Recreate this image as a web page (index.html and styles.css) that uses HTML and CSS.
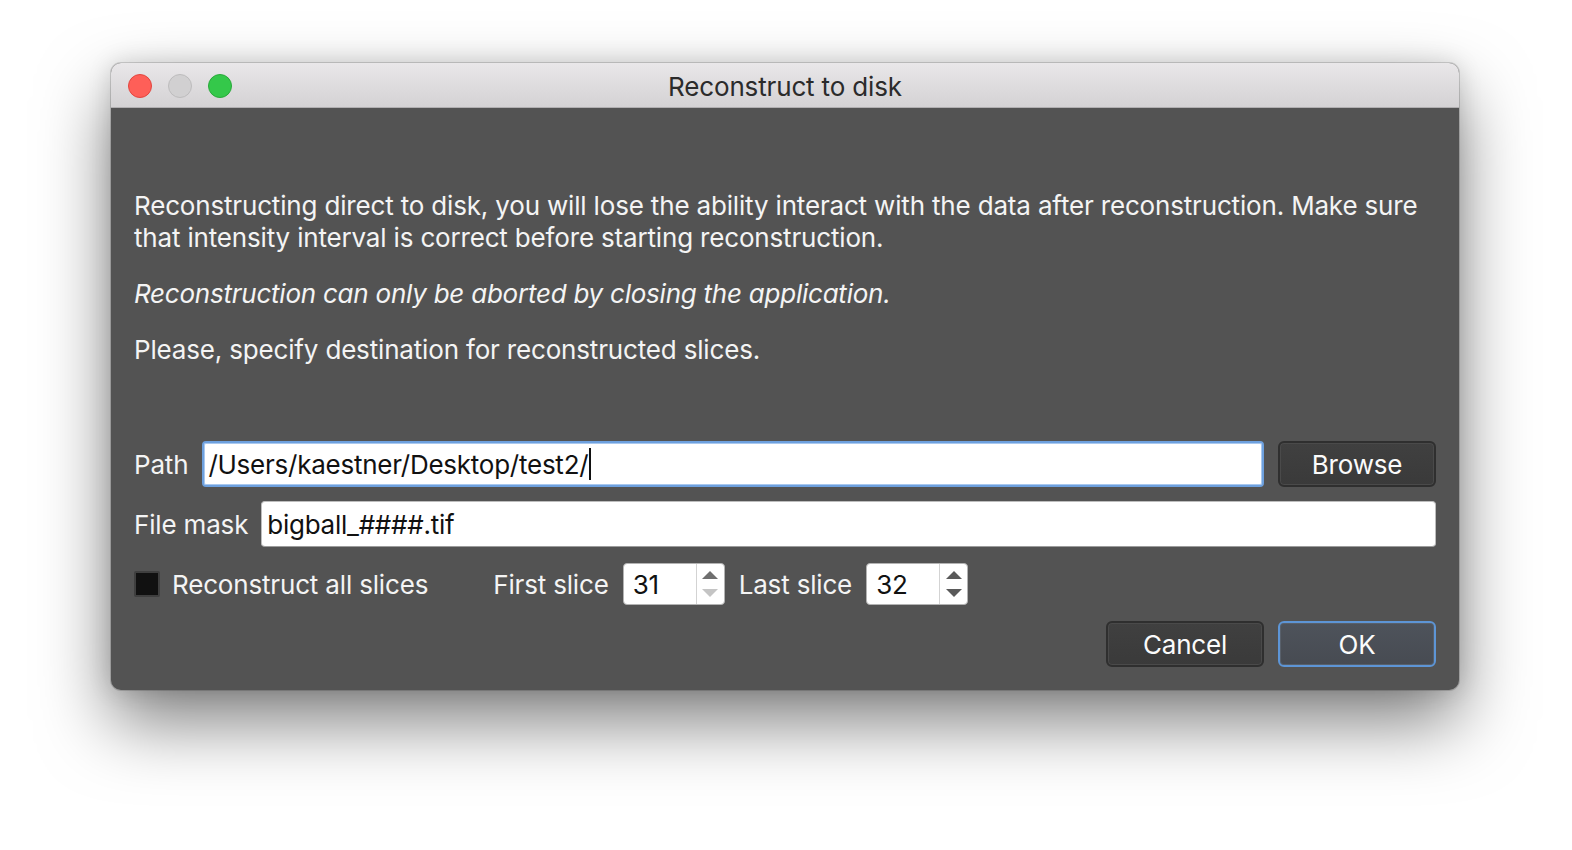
FILE: index.html
```html
<!DOCTYPE html>
<html>
<head>
<meta charset="utf-8">
<link rel="stylesheet" href="styles.css">
</head>
<body>
<div class="desk">
  <div class="window">
    <div class="titlebar">
      <div class="lights">
        <span class="light red"></span>
        <span class="light gray"></span>
        <span class="light green"></span>
      </div>
      <div class="title">Reconstruct to disk</div>
    </div>
    <div class="content">
      <p class="para">Reconstructing direct to disk, you will lose the ability interact with the data after reconstruction. Make sure that intensity interval is correct before starting reconstruction.</p>
      <p class="para italic">Reconstruction can only be aborted by closing the application.</p>
      <p class="para">Please, specify destination for reconstructed slices.</p>

      <div class="form">
        <div class="row">
          <span class="label">Path</span>
          <div class="input focus"><span>/Users/kaestner/Desktop/test2/</span><span class="caret"></span></div>
          <div class="btn">Browse</div>
        </div>
        <div class="row">
          <span class="label">File mask</span>
          <div class="input plain"><span>bigball_####.tif</span></div>
        </div>
        <div class="row slices">
          <span class="check"></span>
          <span class="label checklabel">Reconstruct all slices</span>
          <span class="label first">First slice</span>
          <div class="spin">
            <span class="num">31</span>
            <div class="arrows">
              <svg width="20" height="34" viewBox="0 0 20 34"><path d="M2 12 L10 4 L18 12 Z" fill="#6f6f6f"/><path d="M2 22 L10 30 L18 22 Z" fill="#c4c4c4"/></svg>
            </div>
          </div>
          <span class="label last">Last slice</span>
          <div class="spin">
            <span class="num">32</span>
            <div class="arrows">
              <svg width="20" height="34" viewBox="0 0 20 34"><path d="M2 12 L10 4 L18 12 Z" fill="#5a5a5a"/><path d="M2 22 L10 30 L18 22 Z" fill="#5a5a5a"/></svg>
            </div>
          </div>
        </div>
        <div class="row buttons">
          <div class="btn">Cancel</div>
          <div class="btn ok">OK</div>
        </div>
      </div>
    </div>
  </div>
</div>
</body>
</html>
```

FILE: styles.css
```css
html, body {
  margin: 0;
  padding: 0;
  background: #ffffff;
}
body {
  width: 1572px;
  height: 850px;
  overflow: hidden;
  font-family: Inter, "Noto Sans", sans-serif;
}
.desk {
  padding: 63px 0 0 111px;
}
.window {
  width: 1348px;
  height: 627px;
  border-radius: 10px;
  background: #535353;
  box-shadow: 0 32px 70px rgba(0,0,0,0.5), 0 0 24px rgba(0,0,0,0.14), 0 0 0 1px rgba(0,0,0,0.15);
  overflow: hidden;
  display: flex;
  flex-direction: column;
}
.titlebar {
  height: 44px;
  flex: none;
  background: linear-gradient(#e9e7e9, #d4d2d4);
  border-bottom: 1px solid #b1afb1;
  position: relative;
  display: flex;
  align-items: center;
  justify-content: center;
}
.lights {
  position: absolute;
  left: 17px;
  top: 11px;
  display: flex;
  gap: 16px;
}
.light {
  width: 24px;
  height: 24px;
  border-radius: 50%;
  box-sizing: border-box;
}
.red { background: #fe5f58; border: 1px solid #e2463f; }
.gray { background: #d1d0d1; border: 1px solid #bdbcbd; }
.green { background: #34c84a; border: 1px solid #29a93a; }
.title {
  font-size: 26px;
  color: #2b2b2b;
  letter-spacing: -0.15px;
  margin-top: 3px;
}
.content {
  padding: 82px 23px 23px 23px;
  color: #f4f4f4;
  font-size: 26px;
  letter-spacing: -0.17px;
  flex: 1;
  display: flex;
  flex-direction: column;
}
.para {
  margin: 0 0 24px 0;
  line-height: 32px;
}
.italic { font-style: italic; letter-spacing: -0.24px; }
.form {
  margin-top: 51px;
  display: flex;
  flex-direction: column;
}
.row {
  display: flex;
  align-items: center;
}
.label {
  white-space: nowrap;
}
.row + .row { margin-top: 14px; }
.input {
  flex: 1;
  height: 46px;
  box-sizing: border-box;
  background: #fff;
  color: #111;
  display: flex;
  align-items: center;
  padding-left: 4px;
  border-radius: 4px;
  margin-left: 14px;
  letter-spacing: -0.25px;
}
.input.focus {
  border: 2px solid #6da0de;
  box-shadow: inset 0 0 0 1px #a9c8ee;
}
.input.plain {
  border: 1px solid #bdbdbd;
  border-bottom-color: #9c9c9c;
  margin-left: 13px;
  padding-left: 5px;
}
.caret {
  width: 2px;
  height: 32px;
  background: #111;
  margin-left: 1px;
}
.btn {
  width: 158px;
  height: 46px;
  box-sizing: border-box;
  border: 2px solid #2f2f2f;
  border-radius: 6px;
  background: linear-gradient(#404040, #3a3a3a);
  box-shadow: inset 0 0 0 1px #4a4a4a;
  color: #fbfbfb;
  display: flex;
  align-items: center;
  justify-content: center;
  margin-left: 14px;
}
.slices {
  height: 42px;
  margin-top: 16px !important;
}
.check {
  width: 26px;
  height: 26px;
  box-sizing: border-box;
  background: #111111;
  border: 2px solid #3f3f3f;
  border-radius: 2px;
}
.checklabel { margin-left: 12px; }
.first { margin-left: 65px; }
.last { margin-left: 14px; }
.spin {
  width: 102px;
  height: 42px;
  box-sizing: border-box;
  background: #fff;
  border: 1px solid #b3b3b3;
  border-radius: 4px;
  display: flex;
  align-items: stretch;
  margin-left: 14px;
  color: #111;
}
.num {
  flex: 1;
  display: flex;
  align-items: center;
  padding-left: 9px;
}
.arrows {
  width: 27px;
  border-left: 1px solid #d3d3d3;
  display: flex;
  align-items: center;
  justify-content: center;
}
.buttons {
  justify-content: flex-end;
  margin-top: 16px !important;
}
.btn.ok {
  background: linear-gradient(#4e535b, #474b52);
  border: 2px solid #5d95d6;
  box-shadow: inset 0 0 0 1px #58606b;
}
```
